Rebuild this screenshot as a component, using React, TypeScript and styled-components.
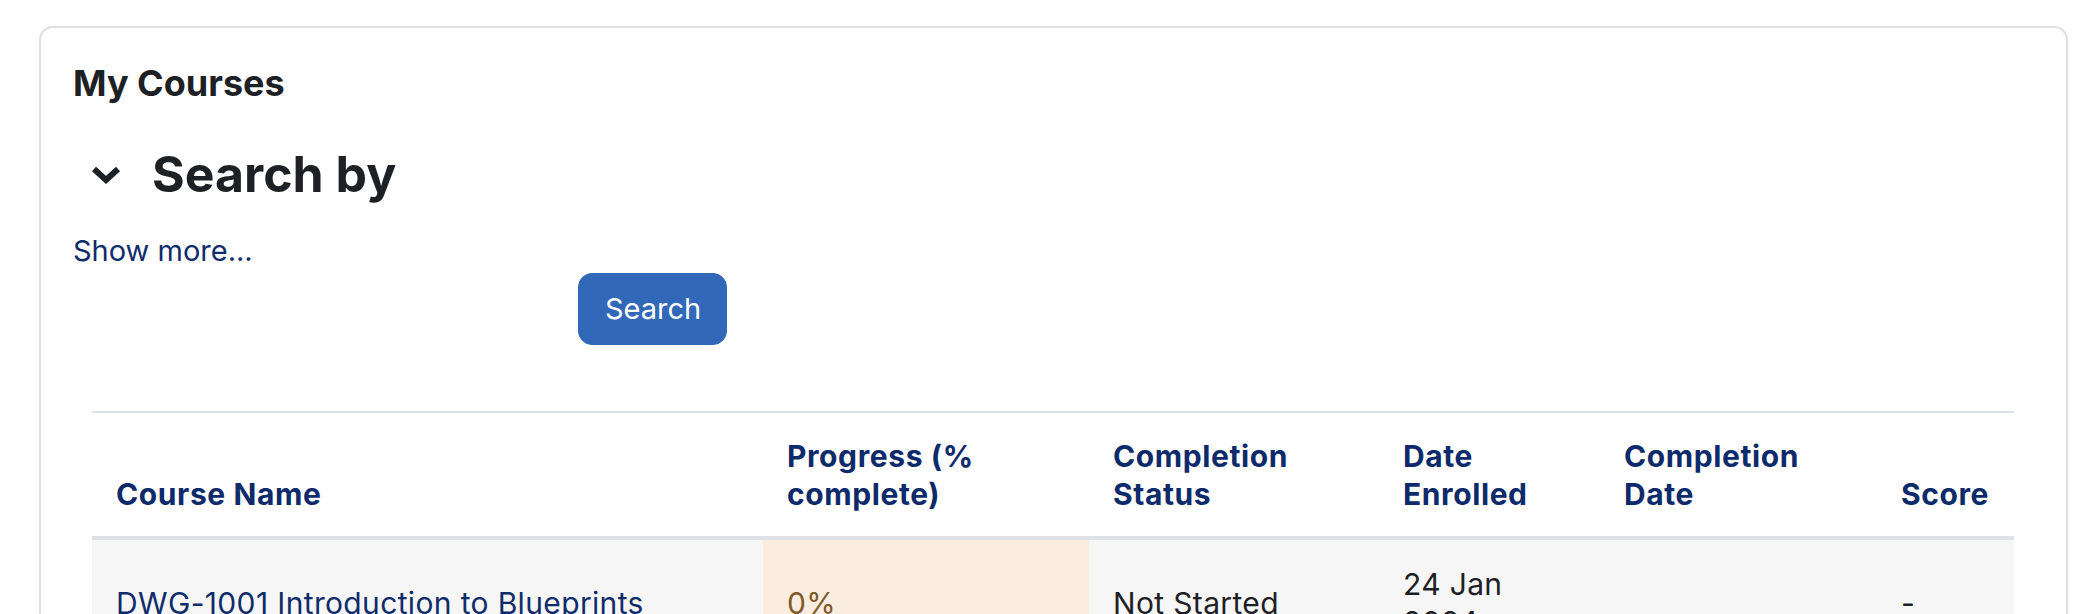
import React from 'react'
import styled, { createGlobalStyle } from 'styled-components'

const GlobalStyle = createGlobalStyle`
  html, body {
    margin: 0;
    padding: 0;
    background: #ffffff;
  }
  body {
    font-family: Inter, "Noto Sans", "Liberation Sans", sans-serif;
    font-size: 29px;
    line-height: 1.5;
    color: #1d2125;
  }
  * {
    box-sizing: border-box;
  }
`

const Page = styled.div`
  padding: 26px 32px 0 39px;
`

const Card = styled.section`
  border: 2px solid #dfdfdf;
  border-radius: 14px;
  background: #ffffff;
`

const CardBody = styled.div`
  padding: 33px 32px 40px 32px;
`

const CardTitle = styled.h5`
  margin: 0;
  font-size: 36px;
  line-height: 45px;
  font-weight: 700;
  color: #1d2125;
`

const SectionHeader = styled.div`
  display: flex;
  align-items: center;
  gap: 30px;
  margin-top: 37px;
  padding-left: 17px;
`

const Toggle = styled.a`
  display: flex;
  align-items: center;
  color: #1d2125;
  cursor: pointer;
`

const SectionTitle = styled.h3`
  margin: 0;
  font-size: 50px;
  line-height: 63px;
  font-weight: 700;
  color: #1d2125;
`

const MoreLink = styled.a`
  display: block;
  margin-top: 22px;
  font-size: 29px;
  line-height: 45px;
  color: #0f2c6b;
  text-decoration: none;
  cursor: pointer;
`

const FormRow = styled.div`
  display: grid;
  grid-template-columns: 505px 1fr;
`

const Button = styled.button`
  justify-self: start;
  font-family: inherit;
  font-size: 29px;
  line-height: 46px;
  padding: 12px 25px 12px 26px;
  color: #ffffff;
  background: #3268b8;
  border: 1px solid #3268b8;
  border-radius: 14px;
  cursor: pointer;
`

const TableWrap = styled.div`
  margin: 66px 20px 0 19px;
`

const Table = styled.table`
  width: 100%;
  table-layout: fixed;
  border-collapse: collapse;
  font-size: 30px;
  line-height: 37.5px;
`

const HeadCell = styled.th`
  text-align: left;
  vertical-align: bottom;
  padding: 25px 24px 23px 24px;
  font-weight: 700;
  letter-spacing: 0.6px;
  color: #0d2a6b;
  border-top: 2px solid #dee2e6;
  border-bottom: 4px solid #dee2e6;
`

const Row = styled.tr`
  background: #f6f6f6;
`

const Cell = styled.td<{ $tone?: 'progress' }>`
  vertical-align: middle;
  padding: 26px 24px 24px 24px;
  letter-spacing: 0.35px;
  color: ${(p) => (p.$tone === 'progress' ? '#7d5a2b' : '#1d2125')};
  background: ${(p) => (p.$tone === 'progress' ? '#faeddf' : 'transparent')};
`

const CourseLink = styled.a`
  color: #0f2c6b;
  text-decoration: none;
`

function ChevronDown() {
  return (
    <svg width="32" height="20" viewBox="0 0 32 20" aria-hidden="true">
      <polyline
        points="4,4 16,15 28,4"
        fill="none"
        stroke="currentColor"
        strokeWidth="6"
        strokeLinejoin="miter"
        strokeLinecap="butt"
      />
    </svg>
  )
}

const columns = [
  { label: 'Course Name', width: 671 },
  { label: 'Progress (% complete)', width: 326 },
  { label: 'Completion Status', width: 290 },
  { label: 'Date Enrolled', width: 221 },
  { label: 'Completion Date', width: 277 },
  { label: 'Score', width: 137 },
]

const courses = [
  {
    name: 'DWG-1001 Introduction to Blueprints',
    progress: '0%',
    status: 'Not Started',
    enrolled: '24 Jan 2024',
    completed: '',
    score: '-',
  },
]

export default function App() {
  return (
    <>
      <GlobalStyle />
      <Page>
        <Card>
          <CardBody>
            <CardTitle>My Courses</CardTitle>
            <SectionHeader>
              <Toggle>
                <ChevronDown />
              </Toggle>
              <SectionTitle>Search by</SectionTitle>
            </SectionHeader>
            <MoreLink>Show more...</MoreLink>
            <FormRow>
              <div />
              <Button type="button">Search</Button>
            </FormRow>
            <TableWrap>
              <Table>
                <colgroup>
                  {columns.map((c) => (
                    <col key={c.label} style={{ width: c.width }} />
                  ))}
                </colgroup>
                <thead>
                  <tr>
                    {columns.map((c) => (
                      <HeadCell key={c.label}>{c.label}</HeadCell>
                    ))}
                  </tr>
                </thead>
                <tbody>
                  {courses.map((c) => (
                    <Row key={c.name}>
                      <Cell>
                        <CourseLink>{c.name}</CourseLink>
                      </Cell>
                      <Cell $tone="progress">{c.progress}</Cell>
                      <Cell>{c.status}</Cell>
                      <Cell>{c.enrolled}</Cell>
                      <Cell>{c.completed}</Cell>
                      <Cell>{c.score}</Cell>
                    </Row>
                  ))}
                </tbody>
              </Table>
            </TableWrap>
          </CardBody>
        </Card>
      </Page>
    </>
  )
}
